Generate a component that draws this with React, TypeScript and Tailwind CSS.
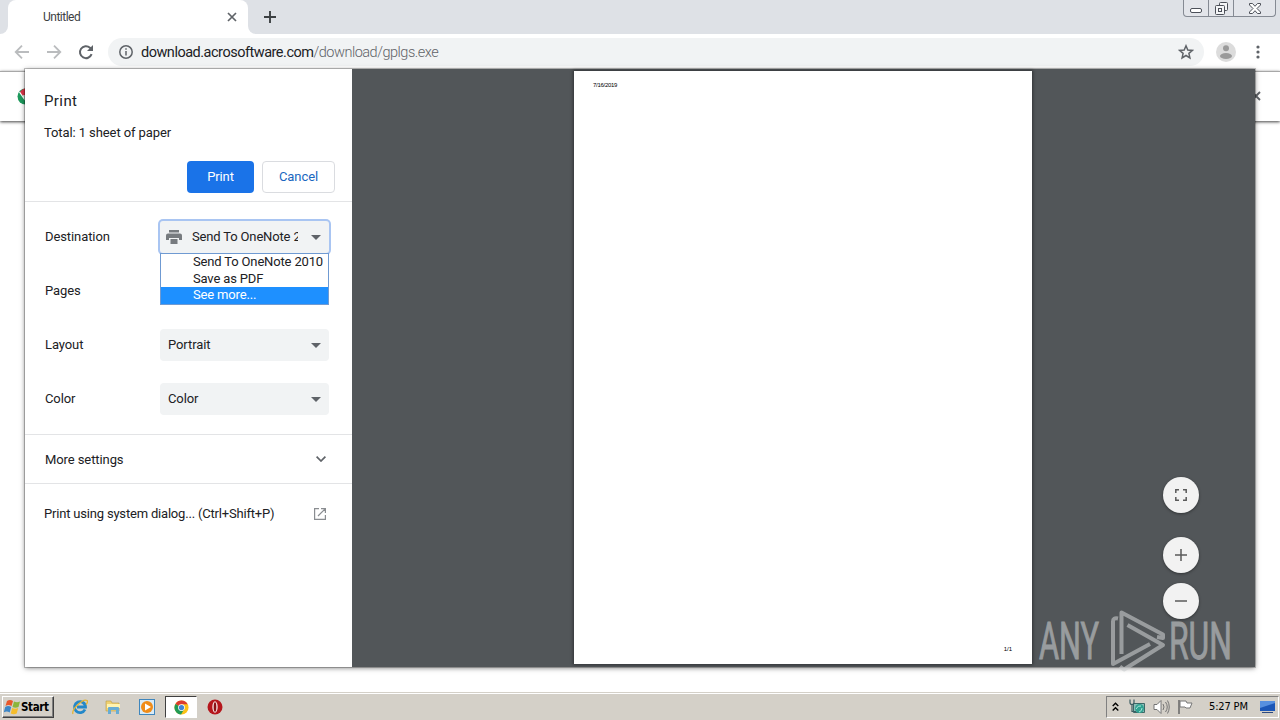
import type { ReactNode } from "react";

interface SettingRowProps {
  label: string;
  children?: ReactNode;
}

function SettingRow({ label, children }: SettingRowProps) {
  return (
    <div className="flex h-[54px] items-center pl-5 pr-[22px]">
      <span className="w-[115px]">{label}</span>
      {children}
    </div>
  );
}

function Caret() {
  return (
    <svg width="10" height="5" viewBox="0 0 10 5" className="shrink-0">
      <path d="M0 0h10L5 5z" fill="#5f6368" />
    </svg>
  );
}

function Select({ value }: { value: string }) {
  return (
    <div className="flex h-8 w-[169px] items-center justify-between rounded bg-[#f1f3f4] pl-2 pr-2">
      <span>{value}</span>
      <Caret />
    </div>
  );
}

function ChromeLogo({ size }: { size: number }) {
  return (
    <svg width={size} height={size} viewBox="0 0 16 16" className="shrink-0">
      <circle cx="8" cy="8" r="7.5" fill="#fbc116" />
      <path d="M8 8 1.5 4.2A7.5 7.5 0 0 1 14.6 4.5H8z" fill="#dc3c30" />
      <path d="M8 8 1.5 4.2A7.5 7.5 0 0 0 7.5 15.5L11 9.6z" fill="#219a55" />
      <circle cx="8" cy="8" r="3.6" fill="#fff" />
      <circle cx="8" cy="8" r="2.8" fill="#4285d4" />
    </svg>
  );
}

function TabStrip() {
  return (
    <div className="flex h-[34px] shrink-0 bg-[#dee1e6]">
      <div className="w-2 bg-white">
        <div className="h-full rounded-br-lg bg-[#dee1e6]" />
      </div>
      <div className="flex w-60 items-center rounded-t-lg bg-white pl-[35px] pr-[11px] text-[12px] text-[#3c4043]">
        <span className="tracking-[-0.5px]">Untitled</span>
        <svg width="10" height="10" viewBox="0 0 10 10" className="ml-auto">
          <path d="M1 1l8 8M9 1l-8 8" stroke="#5f6368" strokeWidth="1.7" />
        </svg>
      </div>
      <div className="w-2 bg-white">
        <div className="h-full rounded-bl-lg bg-[#dee1e6]" />
      </div>
      <svg width="12" height="12" viewBox="0 0 12 12" className="ml-2 mt-[11px]">
        <path d="M6 0v12M0 6h12" stroke="#3c4043" strokeWidth="1.9" />
      </svg>
      {/* Window buttons */}
      <div className="ml-auto mr-[4px] flex h-[17px] w-[93px] rounded-b border border-t-0 border-[#858a93] bg-[#e3e5ea]">
        <div className="flex w-[25px] items-end justify-center border-r border-[#858a93] pb-[3px]">
          <div className="h-[5px] w-3 rounded-[2px] border border-[#4c5059] bg-white" />
        </div>
        <div className="flex w-[25px] justify-center border-r border-[#858a93] pt-[2px]">
          <svg width="13" height="13" viewBox="0 0 13 13" fill="#f4f5f7" stroke="#4c5059">
            <rect x="4.5" y=".5" width="8" height="8" rx="1" />
            <rect x=".5" y="3.5" width="9" height="9" rx="1" />
            <rect x="3.5" y="6.5" width="3" height="3" />
          </svg>
        </div>
        <div className="flex flex-1 justify-center pt-[3px]">
          <svg width="12" height="11" viewBox="0 0 12 11">
            <path
              d="M.5.5h3L6 3.3 8.5.5h3v1.5L8 5.5l3.5 3.5v1.5h-3L6 7.7 3.5 10.5h-3V9L4 5.5.5 2z"
              fill="#fff"
              stroke="#4c5059"
            />
          </svg>
        </div>
      </div>
    </div>
  );
}

function Toolbar() {
  return (
    <div className="flex h-[37px] shrink-0 items-start bg-white">
      <div className="flex h-9 w-full items-center">
        <svg width="94" height="16" viewBox="0 0 94 16" className="ml-[3px]" fill="none" strokeWidth="1.8">
          <path d="M26 8H13M19 1.7 12.7 8l6.3 6.3" stroke="#babcbe" />
          <path d="M44 8h13M51 1.7 57.3 8 51 14.3" stroke="#babcbe" />
          <path d="M88.6 10.2A6 6 0 1 1 87 3.7l2 2" stroke="#5f6368" strokeWidth="2" />
          <path d="M90 1v6h-6z" fill="#5f6368" />
        </svg>
        <div className="ml-[11px] flex h-7 w-[1096px] items-center rounded-full bg-[#f1f3f4] px-[11px]">
          <svg width="14" height="14" viewBox="0 0 14 14" fill="none" stroke="#5f6368" strokeWidth="1.5">
            <circle cx="7" cy="7" r="6.2" />
            <path d="M7 6v4.5M7 3.3v1.5" />
          </svg>
          <div className="ml-2 whitespace-nowrap pt-px text-[14.5px] leading-5 tracking-[-0.49px] text-[#202124]">
            download.acrosoftware.com
            <span className="font-light text-[#5f6368]">/download/gplgs.exe</span>
          </div>
          <svg width="16" height="16" viewBox="0 0 16 16" className="-mr-px ml-auto">
            <path
              d="M8 1.8l1.8 4.2 4.6.4-3.5 3 1 4.5L8 11.5l-3.900 2.400 1-4.500-3.500-3 4.600-.4z"
              fill="none"
              stroke="#5f6368"
              strokeWidth="1.5"
            />
          </svg>
        </div>
        <svg width="20" height="20" viewBox="0 0 20 20" className="ml-3">
          <circle cx="10" cy="10" r="10" fill="#dcdcdc" />
          <circle cx="10" cy="6.3" r="3" fill="#9a9a9a" />
          <ellipse cx="10" cy="14" rx="6" ry="3" fill="#9a9a9a" />
        </svg>
        <svg width="4" height="14" viewBox="0 0 4 14" className="ml-5" fill="#5f6368">
          <circle cx="2" cy="2" r="1.6" />
          <circle cx="2" cy="7" r="1.6" />
          <circle cx="2" cy="12" r="1.6" />
        </svg>
      </div>
    </div>
  );
}

function PrintSidebar() {
  return (
    <div className="flex w-[327px] shrink-0 flex-col bg-white text-[13px] tracking-[-0.09px] text-[#202124]">
      <div className="flex h-[133px] flex-col border-b border-[#e3e4e6] pl-[19px] pr-[17px]">
        <h1 className="mt-[21px] text-[15px] leading-[22px] tracking-[0.4px]">Print</h1>
        <p className="mt-3 leading-[18px]">Total: 1 sheet of paper</p>
        <div className="mt-[19px] flex justify-end gap-2">
          <button className="h-8 w-[67px] rounded bg-[#1a73e8] text-white">Print</button>
          <button className="h-8 w-[73px] rounded border border-[#dadce0] text-[#1967c0]">Cancel</button>
        </div>
      </div>

      <div className="relative h-[233px] border-b border-[#e3e4e6] pt-2">
        <SettingRow label="Destination">
          <div className="flex h-8 w-[169px] items-center rounded-[3px] bg-[#f1f3f4] pl-[6px] pr-2 ring-2 ring-[#a9c5f2]">
            <svg width="16" height="14" viewBox="0 0 16 14" className="shrink-0" fill="#777b7f">
              <path d="M3 0h10v2.5H3zM2 3.5h12a2 2 0 0 1 2 2V10h-3V8H3v2H0V5.5a2 2 0 0 1 2-2zM4.5 9h7v5h-7z" />
            </svg>
            <span className="ml-[10px] w-[106px] overflow-hidden whitespace-nowrap tracking-[-0.16px]">
              Send To OneNote 2010
            </span>
            <div className="ml-auto">
              <Caret />
            </div>
          </div>
        </SettingRow>
        <SettingRow label="Pages" />
        <SettingRow label="Layout">
          <Select value="Portrait" />
        </SettingRow>
        <SettingRow label="Color">
          <Select value="Color" />
        </SettingRow>

        {/* Open destination menu */}
        <ul className="absolute left-[135px] top-[51px] h-[52px] w-[169px] whitespace-nowrap border border-[#6f9ad2] bg-white leading-[15px] tracking-[-0.16px]">
          <li className="h-[17px] pl-8">Send To OneNote 2010</li>
          <li className="h-4 pl-8">Save as PDF</li>
          <li className="h-[17px] bg-[#1e90ff] pl-8 leading-4 text-white">See more...</li>
        </ul>
      </div>

      <div className="flex h-[49px] items-center justify-between border-b border-[#e3e4e6] pl-5 pr-[26px]">
        <span className="pt-[2px]">More settings</span>
        <svg width="10" height="6" viewBox="0 0 10 6">
          <path d="M.6.6 5 5 9.4.6" fill="none" stroke="#5f6368" strokeWidth="1.7" />
        </svg>
      </div>
      <div className="flex h-[60px] items-center justify-between pl-[19px] pr-[26px]">
        <span className="tracking-[-0.19px]">Print using system dialog... (Ctrl+Shift+P)</span>
        <svg width="12" height="12" viewBox="0 0 12 12" fill="none" stroke="#8a8d91" strokeWidth="1.2">
          <path d="M5 .6H.6v10.8h10.8V7M7 .6h4.4V5M11.4.6 4 8" />
        </svg>
      </div>
    </div>
  );
}

function ZoomButton({ path }: { path: string }) {
  return (
    <div className="flex h-9 w-9 items-center justify-center rounded-full bg-[#f2f2f2] shadow-[0_1px_3px_rgba(0,0,0,0.4)]">
      <svg width="12" height="12" viewBox="0 0 12 12" fill="none" stroke="#5a5a5a" strokeWidth="1.5">
        <path d={path} />
      </svg>
    </div>
  );
}

function Watermark() {
  return (
    <svg width="200" height="70" viewBox="0 0 200 70" className="absolute left-[1037px] top-[608px] opacity-60">
      <g fill="#c9cccd" stroke="#c9cccd" strokeWidth="0.9" fontFamily="Roboto" fontSize="51">
        <text x="2" y="51" textLength="60" lengthAdjust="spacingAndGlyphs">ANY</text>
        <text x="132" y="51" textLength="63" lengthAdjust="spacingAndGlyphs">RUN</text>
      </g>
      <g fill="none" stroke="#c9cccd" strokeWidth="4" strokeLinejoin="round">
        <path d="M84.500 46V4.500L126 26.500v3.500l-6-1" />
        <path d="M81 10.500q-5-1-5 3V56l37-20" />
        <path d="M90.500 17 126 37 87 61.500l-4-3" />
      </g>
    </svg>
  );
}

function Taskbar() {
  return (
    <div className="relative flex h-7 shrink-0 items-center border-t border-[#d4d0c8] bg-[#d4d0c8] pt-px shadow-[inset_0_1px_0_#fff]">
      <div className="ml-[2px] flex h-[22px] w-[52px] items-center border border-b-[#404040] border-l-white border-r-[#404040] border-t-white pl-px shadow-[inset_-1px_-1px_0_#808080]">
        <svg width="17" height="16" viewBox="0 0 17 16" className="shrink-0">
          <path d="M3 2Q6 0 9 2L7.5 7Q4.500 5 1.500 7z" fill="#e8572a" />
          <path d="M10 2.500q3 1.500 6 0L14.500 8q-3 1.500-6 0z" fill="#8bb53c" />
          <path d="M1.200 8q3-2 6 0L5.700 13.500q-3-2-6 0z" fill="#3d86c6" />
          <path d="M8.200 9q3 1.500 6 0l-1.500 5.500q-3 1.500-6 0z" fill="#f5bd2c" />
        </svg>
        <span className="pt-px font-['DejaVu_Sans_Condensed','DejaVu_Sans'] text-[11.5px] font-bold tracking-[-0.35px] text-black">
          Start
        </span>
      </div>
      <svg width="16" height="16" viewBox="0 0 16 16" className="ml-[18px]" fill="none">
        <path d="M13 10.5A5.5 5.5 0 1 1 13.5 8H5" stroke="#2488c9" strokeWidth="2.8" />
        <path d="M1 15C-1 11 11-1 15 1.500c1 1 0 3-1 4" stroke="#e4b435" strokeWidth="1.3" />
      </svg>
      <svg width="17" height="16" viewBox="0 0 17 16" className="ml-[17px]">
        <path d="M1 2h5l1 2h7v8H1z" fill="#efd172" stroke="#b99a43" strokeWidth=".6" />
        <path d="M2 5h13v4H2z" fill="#fff3b0" />
        <path d="M3 15V9q0-1 1-1h9q1 0 1 1v6h-3v-4H6v4z" fill="#67acd4" />
      </svg>
      <svg width="16" height="16" viewBox="0 0 16 16" className="ml-[17px]">
        <rect x=".5" y=".5" width="15" height="15" fill="#d9ebf7" stroke="#3f86bd" />
        <circle cx="8" cy="8" r="6" fill="#f08c19" />
        <path d="M6 4.500v7L12 8z" fill="#fff" />
      </svg>
      <div className="ml-[10px] flex h-[22px] w-8 items-center justify-center border border-b-white border-l-[#404040] border-r-white border-t-[#404040] bg-white">
        <ChromeLogo size={15} />
      </div>
      <svg width="16" height="16" viewBox="0 0 16 16" className="ml-[10px]">
        <circle cx="8" cy="8" r="7.5" fill="#b5161c" />
        <ellipse cx="8" cy="8" rx="2.7" ry="5.7" fill="#f5dede" />
        <ellipse cx="8" cy="8" rx="1.3" ry="4.8" fill="#8b1115" />
      </svg>

      {/* Tray */}
      <div className="ml-auto mr-px flex h-[22px] w-[173px] items-center border border-b-white border-l-[#808080] border-r-white border-t-[#808080] pl-[5px]">
        <svg width="7" height="10" viewBox="0 0 7 10" fill="none" stroke="#000" strokeWidth="1.4">
          <path d="M.7 4 3.500 1.200 6.300 4M.7 8.500l2.800-2.800 2.800 2.800" />
        </svg>
        <svg width="17" height="16" viewBox="0 0 17 16" className="ml-[10px]">
          <path d="M4.500 4.500h11v9h-11z" fill="#8dbdb8" stroke="#3c6968" />
          <circle cx="10.500" cy="9.500" r="4.500" fill="#2fa291" />
          <path d="M7 10q2-4 5-3M10 13q3-1 3-4" stroke="#aee5db" fill="none" />
          <path d="M1 .5v3q0 2 2 2v7h4M5 .5v3q0 2-2 2" stroke="#3c5d62" strokeWidth="1.2" fill="none" />
        </svg>
        <svg width="17" height="16" viewBox="0 0 17 16" className="ml-[7px]" fill="none" stroke="#747474">
          <path d="M1 5.500h3L8 1.500v13l-4-4H1z" fill="#fff" />
          <path d="M10 5q2 3 0 6M12.500 3q3.500 5 0 10M14.500 1.500q3.500 6.500 0 13" />
        </svg>
        <svg width="17" height="16" viewBox="0 0 17 16" className="ml-[7px]">
          <path d="M2 1v14" stroke="#666" strokeWidth="1.5" />
          <path d="M3 2h6l1 2h5l-2 5H9L8 8H3z" fill="#fff" stroke="#777" />
        </svg>
        <span className="ml-[15px] w-10 whitespace-nowrap pt-px font-['DejaVu_Sans_Condensed','DejaVu_Sans'] text-[11px] tracking-[-0.15px] text-black">
          5:27 PM
        </span>
        <svg width="15" height="14" viewBox="0 0 15 14" className="ml-[11px]">
          <rect y="1" width="15" height="10" fill="#1c57b7" />
          <path d="M0 1h15v2L0 8z" fill="#5790df" />
          <path d="M2 12.500h11" stroke="#2d4a80" />
        </svg>
      </div>
    </div>
  );
}

export default function App() {
  return (
    <div className="relative flex h-[720px] w-[1280px] flex-col overflow-hidden bg-white font-[Roboto,sans-serif]">
      <TabStrip />
      <Toolbar />
      {/* Default browser bar */}
      <div className="flex h-[50px] shrink-0 items-center justify-between border-t border-[#a8a8a8] bg-white pb-px pl-[17px] pr-[19px] shadow-[0_1px_3px_rgba(0,0,0,0.75)]">
        <svg width="17" height="17" viewBox="0 0 17 17">
          <circle cx="8.5" cy="8.5" r="8" fill="#1d9a5c" />
          <path d="M3 4Q6 0 8.500.5q4 0 6 3L8.500 8 4.500 7z" fill="#e0354a" />
          <path d="M2.500 4 7 10.500V7" stroke="#fff" strokeWidth="1.3" fill="none" />
        </svg>
        <svg width="10" height="10" viewBox="0 0 10 10">
          <path d="M1 1l8 8M9 1 1 9" stroke="#5f6368" strokeWidth="1.9" />
        </svg>
      </div>
      <div className="flex-1" />
      <Taskbar />

      {/* Print dialog */}
      <div className="absolute left-[25px] top-[69px] flex h-[598px] w-[1230px] bg-[#525659] shadow-[0_0_0_1px_rgba(0,0,0,0.22),0_1px_5px_rgba(0,0,0,0.5)]">
        <PrintSidebar />
        <div className="flex flex-1 justify-between pl-[222px] pr-14 pt-[2px]">
          <div className="flex h-[593px] w-[458px] flex-col justify-between bg-white pb-[11px] pl-[19px] pr-5 pt-[10px] font-['Liberation_Sans',sans-serif] text-[6px] leading-[8px] text-black shadow-[0_0_3px_1px_rgba(0,0,0,0.4)]">
            <span className="tracking-[-0.28px]">7/16/2019</span>
            <span className="text-right">1/1</span>
          </div>
          <div className="flex flex-col pt-[406px]">
            <ZoomButton path="M.8 4V.8H4M8 .8h3.2V4M11.2 8v3.200H8M4 11.200H.8V8" />
            <div className="h-6" />
            <ZoomButton path="M6 0v12M0 6h12" />
            <div className="h-[10px]" />
            <ZoomButton path="M0 6h12" />
          </div>
        </div>
      </div>
      <Watermark />
    </div>
  );
}
